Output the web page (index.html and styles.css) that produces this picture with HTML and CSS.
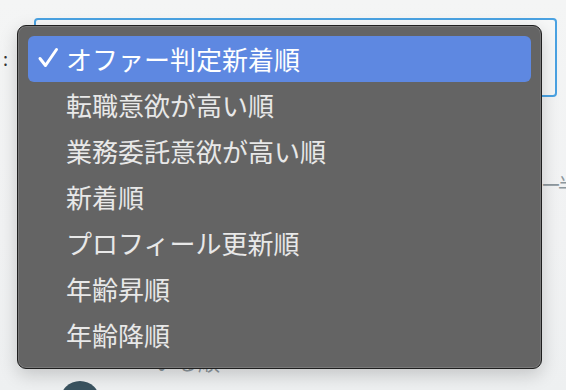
FILE: index.html
```html
<!DOCTYPE html>
<html lang="ja">
<head>
<meta charset="utf-8">
<link rel="stylesheet" href="styles.css">
</head>
<body>
<div class="page">
  <div class="field-row">
    <span class="label">:</span>
    <div class="select-box"></div>
  </div>
  <div class="side-text">ー半</div>
  <div class="under-text">いる順</div>
  <div class="avatar"></div>

  <div class="menu">
    <div class="item selected">
      <svg class="check" width="22" height="22" viewBox="0 0 22 22"><polyline points="3,11.5 8.5,18.5 19.5,2.5" fill="none" stroke="#ffffff" stroke-width="3" stroke-linecap="round" stroke-linejoin="round"/></svg>
      <span>オファー判定新着順</span>
    </div>
    <div class="item"><span>転職意欲が高い順</span></div>
    <div class="item"><span>業務委託意欲が高い順</span></div>
    <div class="item"><span>新着順</span></div>
    <div class="item"><span>プロフィール更新順</span></div>
    <div class="item"><span>年齢昇順</span></div>
    <div class="item"><span>年齢降順</span></div>
  </div>
</div>
</body>
</html>
```

FILE: styles.css
```css
html, body {
  margin: 0;
  padding: 0;
}
body {
  width: 566px;
  height: 390px;
  overflow: hidden;
  background: linear-gradient(180deg, #f4f5f5 0%, #f1f2f3 60%, #eef0f1 100%);
  font-family: "Noto Sans CJK JP", "Noto Sans", sans-serif;
}
.page {
  position: relative;
  width: 566px;
  height: 390px;
  overflow: hidden;
}
.field-row {
  display: flex;
  align-items: center;
  padding-top: 18px;
}
.label {
  width: 34px;
  padding-left: 3px;
  box-sizing: border-box;
  font-size: 18px;
  color: #333;
  line-height: 1;
}
.select-box {
  width: 523px;
  height: 79px;
  box-sizing: border-box;
  border: 2px solid #4aa2e2;
  border-radius: 4px;
  background: #f6f7f7;
}
.side-text {
  margin: 74px 0 0 541px;
  width: 25px;
  overflow: hidden;
  white-space: nowrap;
  font-size: 20px;
  letter-spacing: -3px;
  line-height: 28px;
  color: #8d979d;
}
.under-text {
  margin: 149px 0 0 154px;
  font-size: 22px;
  line-height: 24px;
  color: #8d979d;
}
.avatar {
  margin: 9px 0 0 60px;
  width: 40px;
  height: 40px;
  border-radius: 50%;
  background: #3a5360;
}
.menu {
  position: absolute;
  left: 17px;
  top: 25px;
  width: 525px;
  height: 344px;
  box-sizing: border-box;
  padding: 10px 10px 9px 10px;
  background: #646464;
  border: 1px solid #1f1f1f;
  border-radius: 9px;
  box-shadow: inset 0 0 0 1px rgba(255, 255, 255, 0.14), 0 6px 18px rgba(0, 0, 0, 0.18);
  display: flex;
  flex-direction: column;
}
.item {
  position: relative;
  height: 46px;
  flex: 0 0 46px;
  display: flex;
  align-items: center;
  padding-left: 38px;
  border-radius: 6px;
  font-size: 26px;
  color: #e8e8e8;
  white-space: nowrap;
}
.item span {
  line-height: 1;
}
.item.selected {
  background: #5e88e1;
  color: #ffffff;
}
.check {
  position: absolute;
  left: 9px;
  top: 11px;
}
```
